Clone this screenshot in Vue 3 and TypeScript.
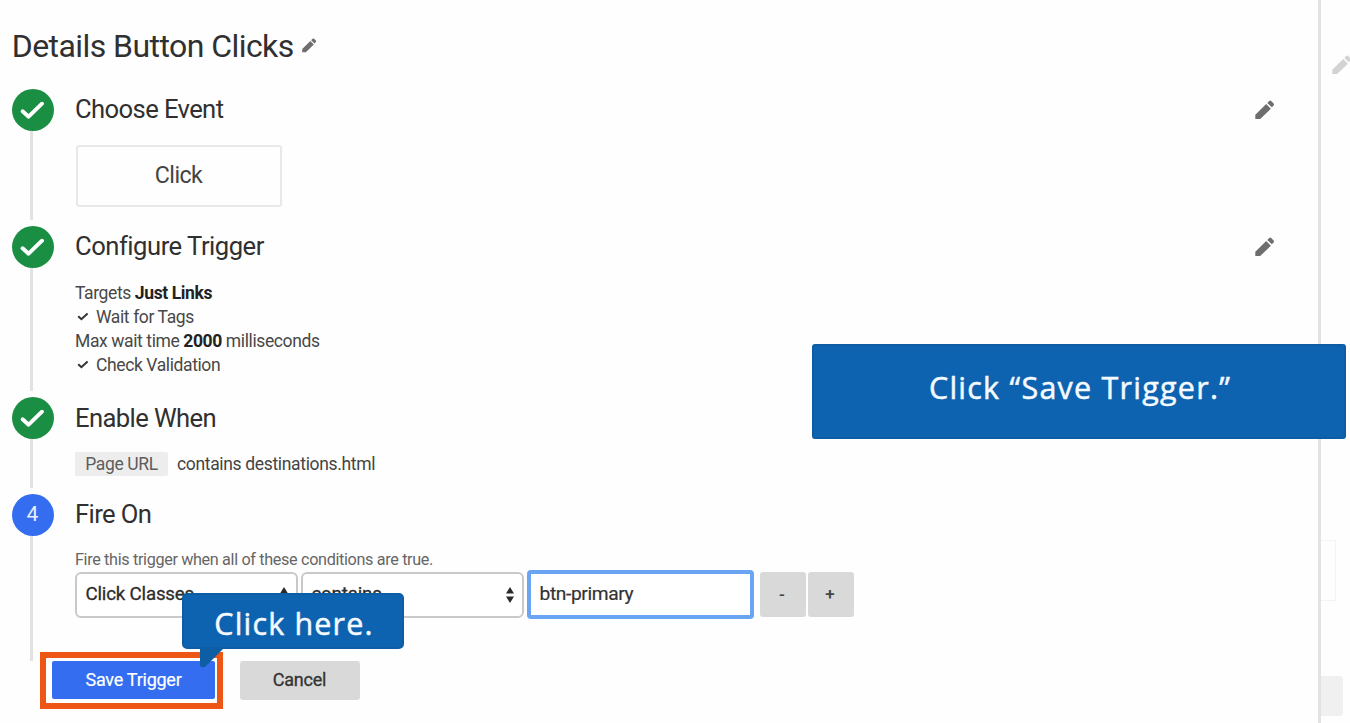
<script setup lang="ts">
import { ref } from 'vue'

const PENCIL = 'M.3 19V14.700L11.200 4.100l4.700 4.700L5.200 19zM12.300 2.900L14.200 1q1-.8 2 0l2.400 2.400q.8 1 0 2l-1.800 1.900z'
const CHECK = 'M10.600 22.200l6 5.500 13.400-13'
const TICK = 'M1.200 4.200L4.400 7.200 10.600 1.400'
const className = ref<string>('btn-primary')
</script>

<template>
  <div class="page">
    <main class="sheet">
      <header class="title">
        <h1>Details Button Clicks</h1>
        <svg class="pencil small" viewBox="0 0 19.500 19.500"><path :d="PENCIL" /></svg>
      </header>

      <section class="step first">
        <div class="rail">
          <span class="dot"><svg viewBox="0 0 42 42"><path :d="CHECK" /></svg></span>
          <span class="line"></span>
        </div>
        <div class="body">
          <h2>Choose Event</h2>
          <div class="event">Click</div>
        </div>
        <svg class="pencil edit" viewBox="0 0 19.500 19.500"><path :d="PENCIL" /></svg>
      </section>

      <section class="step second">
        <div class="rail">
          <span class="dot"><svg viewBox="0 0 42 42"><path :d="CHECK" /></svg></span>
          <span class="line"></span>
        </div>
        <div class="body">
          <h2 class="wide">Configure Trigger</h2>
          <div class="summary">
            <p>Targets <b>Just Links</b></p>
            <p><svg class="tick" viewBox="0 0 12 9"><path :d="TICK" /></svg>Wait for Tags</p>
            <p>Max wait time <b>2000</b> milliseconds</p>
            <p><svg class="tick" viewBox="0 0 12 9"><path :d="TICK" /></svg>Check Validation</p>
          </div>
        </div>
        <svg class="pencil edit" viewBox="0 0 19.500 19.500"><path :d="PENCIL" /></svg>
      </section>

      <section class="step third">
        <div class="rail">
          <span class="dot"><svg viewBox="0 0 42 42"><path :d="CHECK" /></svg></span>
          <span class="line"></span>
        </div>
        <div class="body">
          <h2>Enable When</h2>
          <div class="rule"><span class="chip">Page URL</span><span>contains destinations.html</span></div>
        </div>
      </section>

      <section class="step fourth">
        <div class="rail">
          <span class="dot current">4</span>
          <span class="line"></span>
        </div>
        <div class="body">
          <h2>Fire On</h2>
          <p class="hint">Fire this trigger when all of these conditions are true.</p>
          <div class="condition">
            <div class="select">
              <span>Click Classes</span>
              <svg class="arrows" viewBox="0 0 8 16"><path d="M0 6.500L4 0l4 6.500zM0 9.500h8L4 16z" /></svg>
            </div>
            <div class="select">
              <span>contains</span>
              <svg class="arrows" viewBox="0 0 8 16"><path d="M0 6.500L4 0l4 6.500zM0 9.500h8L4 16z" /></svg>
            </div>
            <input v-model="className" class="value" type="text" />
            <button class="sign minus" type="button">-</button>
            <button class="sign" type="button">+</button>
          </div>
        </div>
      </section>

      <footer class="actions">
        <div class="save-wrap">
          <button class="save" type="button">Save Trigger</button>
          <span class="highlight"></span>
        </div>
        <button class="cancel" type="button">Cancel</button>
      </footer>
    </main>

    <aside class="behind">
      <svg class="pencil faded" viewBox="0 0 19.500 19.500"><path :d="PENCIL" /></svg>
      <div class="ghost-box"></div>
      <div class="ghost-button"></div>
    </aside>

    <div class="callout large">Click “Save Trigger.”</div>
    <div class="callout here">
      Click here.
      <svg class="tail" viewBox="0 0 24 21"><path d="M0 0v18q1 2 5 1L24 0z" /></svg>
    </div>
  </div>
</template>

<style>
body {
  overflow: hidden;
}
</style>

<style scoped>
* {
  box-sizing: border-box;
}
.page {
  position: relative;
  display: flex;
  width: 1350px;
  height: 723px;
  overflow: hidden;
  background: #fefefe;
  color: #303030;
  font-family: Roboto, "Liberation Sans", sans-serif;
}
h1,
h2,
p {
  margin: 0;
  font-weight: 400;
}
.sheet {
  width: 1320.500px;
  flex: none;
  border-right: 3px solid #e2e2e2;
}
.title {
  display: flex;
  align-items: center;
  height: 88.500px;
  padding: 4px 0 0 11.700px;
}
h1 {
  font-size: 32px;
  letter-spacing: -.56px;
  line-height: 36px;
  white-space: nowrap;
}
.pencil {
  display: block;
  flex: none;
  fill: #6e6e6e;
}
.pencil.small {
  width: 14.500px;
  height: 14.500px;
  margin: 0 0 2px 8.500px;
}
.step {
  display: flex;
  padding-left: 11.500px;
}
.first {
  height: 137px;
}
.second {
  height: 171px;
}
.third {
  height: 97.500px;
}
.fourth {
  height: 167px;
}
.rail {
  display: flex;
  flex-direction: column;
  width: 42px;
  padding-bottom: 6px;
}
.fourth .rail {
  padding-bottom: 0;
}
.dot {
  display: flex;
  align-items: center;
  justify-content: center;
  flex: none;
  width: 42px;
  height: 42px;
  border-radius: 50%;
  background: #1a8f43;
}
.dot svg {
  width: 42px;
  height: 42px;
  fill: none;
  stroke: #fff;
  stroke-width: 3.900;
  stroke-linecap: round;
  stroke-linejoin: round;
}
.dot.current {
  background: #356df1;
  color: #e9f0ff;
  font-size: 21px;
  padding-bottom: 2px;
}
.line {
  flex: 1;
  width: 3px;
  margin-left: 18.500px;
  background: #e2e2e2;
}
.body {
  flex: 1;
  padding-left: 21.500px;
}
h2 {
  height: 42px;
  font-size: 25.600px;
  letter-spacing: -.6px;
  line-height: 41px;
}
h2.wide {
  letter-spacing: -.48px;
}
.third h2 {
  line-height: 42px;
}
.fourth h2 {
  line-height: 40px;
}
.edit {
  width: 19.500px;
  height: 19.500px;
  margin: 11.500px 43px 0 0;
}
.event {
  width: 206px;
  height: 62px;
  margin: 14px 0 0 .5px;
  border: 2px solid #e8e8e8;
  border-radius: 3px;
  font-size: 23.200px;
  letter-spacing: -.6px;
  line-height: 57px;
  text-align: center;
  color: #444;
}
.summary {
  padding-top: 13px;
  font-size: 17.500px;
  letter-spacing: -.39px;
  line-height: 24px;
  color: #484848;
}
.summary b {
  font-weight: 700;
  color: #222;
}
.summary p {
  white-space: nowrap;
}
.tick {
  width: 12px;
  height: 9px;
  margin: 0 7px 2px 2px;
  fill: none;
  stroke: #333;
  stroke-width: 2;
}
.rule {
  display: flex;
  align-items: center;
  padding-top: 13.500px;
  font-size: 17.500px;
  letter-spacing: -.34px;
  color: #444;
}
.chip {
  width: 93px;
  height: 24px;
  margin-right: 9px;
  border-radius: 2px;
  background: #ededed;
  line-height: 24px;
  text-align: center;
  color: #5d5d5d;
}
.hint {
  margin-top: 14px;
  height: 20px;
  font-size: 16.200px;
  letter-spacing: -.34px;
  line-height: 20px;
  color: #666;
}
.condition {
  display: flex;
  align-items: center;
  height: 49px;
}
.select {
  display: flex;
  align-items: center;
  justify-content: space-between;
  width: 223px;
  height: 46px;
  margin-right: 3px;
  padding: 0 8px 2px 8.500px;
  border: 2px solid #c9c9c9;
  border-radius: 6px;
  background: #fff;
  font-size: 18.700px;
  letter-spacing: -.18px;
  color: #2c2c2c;
  -webkit-text-stroke: .3px #2c2c2c;
}
.arrows {
  width: 8px;
  height: 16px;
  margin-top: 2px;
  fill: #2a2a2a;
}
.value {
  width: 227px;
  height: 49px;
  margin: 0;
  padding: 0 0 2px 8.500px;
  border: 4px solid #69a5f2;
  border-radius: 4px;
  outline: 0;
  background: #fff;
  font: 400 19.200px Roboto, "Liberation Sans", sans-serif;
  letter-spacing: -.38px;
  color: #333;
  -webkit-text-stroke: .2px #333;
}
.sign {
  width: 46px;
  height: 45px;
  padding: 0 2px 2px 0;
  border: 0;
  border-radius: 3px;
  background: #d9d9d9;
  font: 500 17px Roboto, "Liberation Sans", sans-serif;
  color: #444;
}
.minus {
  margin: 0 2px 0 6px;
}
.actions {
  display: flex;
  padding-left: 52px;
}
.save-wrap {
  position: relative;
  margin-right: 25px;
}
.save,
.cancel {
  display: block;
  height: 38px;
  padding: 0 1px 2px 0;
  border: 0;
  border-radius: 2px;
  font: 400 18px Roboto, "Liberation Sans", sans-serif;
  letter-spacing: -.25px;
}
.save {
  width: 163px;
  padding-right: 0;
  background: #356df1;
  color: #fff;
  -webkit-text-stroke: .2px #fff;
}
.cancel {
  width: 120px;
  height: 39px;
  border-radius: 3px;
  background: #d9d9d9;
  color: #333;
  -webkit-text-stroke: .3px #333;
}
.highlight {
  position: absolute;
  inset: -9px -8px -9px -12px;
  border: 6px solid #ed5614;
}
.behind {
  flex: 1;
  overflow: hidden;
}
.faded {
  width: 19.500px;
  height: 19.500px;
  margin: 55px 0 0 11px;
  fill: #d3d3d3;
}
.ghost-box {
  width: 15.500px;
  height: 61px;
  margin-top: 465.500px;
  border: solid #f3f3f3;
  border-width: 1px 1px 1px 0;
}
.ghost-button {
  width: 22px;
  height: 40px;
  margin-top: 75px;
  border-radius: 0 3px 3px 0;
  background: #f0f0f0;
}
.callout {
  position: absolute;
  background: #0e63b0;
  border: 2px solid #0d5da5;
  color: #f4faff;
  font-family: "Open Sans", "Noto Sans", sans-serif;
  font-size: 30.500px;
  text-align: center;
  white-space: nowrap;
  -webkit-text-stroke: .5px #f4faff;
}
.large {
  left: 812px;
  top: 344px;
  width: 534px;
  height: 95px;
  padding-left: 2px;
  border-radius: 3px;
  line-height: 83px;
  letter-spacing: 1.240px;
}
.here {
  left: 182px;
  top: 593px;
  width: 222px;
  height: 56px;
  padding-left: 2px;
  border-radius: 5px;
  line-height: 57px;
  letter-spacing: 1.150px;
}
.tail {
  position: absolute;
  left: 16px;
  top: 53px;
  width: 24px;
  height: 21px;
  fill: #0e5ea6;
}
</style>
